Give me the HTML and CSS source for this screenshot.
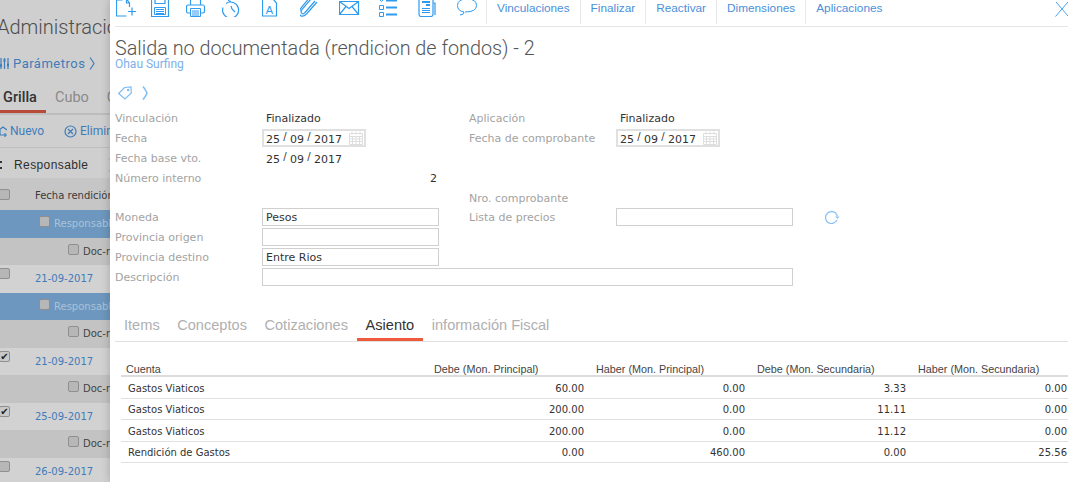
FILE: index.html
```html
<!DOCTYPE html>
<html lang="es">
<head>
<meta charset="utf-8">
<title>Salida no documentada</title>
<link rel="stylesheet" href="styles.css">
</head>
<body>
<div class="page">
  <aside class="side">
    <div class="side-title">Administración</div>
    <div class="side-params">
      <svg class="side-ico" width="9" height="13" viewBox="0 0 9 13"><path d="M1 1v11M4.500 1v11M8 1v11"/><path class="knob" d="M0 8.500h2M3.500 3.500h2M7 8h2"/></svg>
      <span>Parámetros</span>
      <svg class="side-ico" width="6" height="13" viewBox="0 0 6 13"><path d="M1 .5Q3.500 4 5 6.500Q3.500 9 1 12.500"/></svg>
    </div>
    <div class="side-tabs"><span class="side-tab-on">Grilla</span><span>Cubo</span><span>Calendario</span></div>
    <div class="side-tools">
      <svg class="side-ico" width="7" height="14" viewBox="0 0 7 14"><path d="M-1 6l4-3 4 3M0 6v5h4M5 9v4M3 11h4"/></svg>
      <span>Nuevo</span><i class="side-sep"></i>
      <svg class="side-ico" width="13" height="13" viewBox="0 0 13 13"><circle cx="6.500" cy="6.500" r="5.500"/><path d="M4 4l5 5M9 4l-5 5"/></svg>
      <span>Eliminar</span>
    </div>
    <div class="side-group"><b class="side-bars"></b><span>Responsable</span>
      <svg class="side-gt" width="5" height="14" viewBox="0 0 5 14"><path d="M1 .5Q3.500 4 4 7Q3.500 10 1 13.500"/></svg>
    </div>
    <div class="side-row head"><i class="cb"></i><span>Fecha rendición</span></div>
    <div class="side-row blue ind1"><i class="cb"></i><span>Responsable</span></div>
    <div class="side-row grey ind2"><i class="cb"></i><span>Doc-rendicion</span></div>
    <div class="side-row light"><i class="cb"></i><a>21-09-2017</a></div>
    <div class="side-row blue ind1"><i class="cb"></i><span>Responsable</span></div>
    <div class="side-row grey ind2"><i class="cb"></i><span>Doc-rendicion</span></div>
    <div class="side-row light"><i class="cb on">✔</i><a>21-09-2017</a></div>
    <div class="side-row grey ind2"><i class="cb"></i><span>Doc-rendicion</span></div>
    <div class="side-row light"><i class="cb on">✔</i><a>25-09-2017</a></div>
    <div class="side-row grey ind2"><i class="cb"></i><span>Doc-rendicion</span></div>
    <div class="side-row light"><i class="cb"></i><a>26-09-2017</a></div>
  </aside>

  <main class="modal">
    <div class="toolbar">
      <svg class="ti" width="35" height="17" viewBox="0 0 35 17"><path d="M6.500 -1h4v4h3v4M13.500 3l-3-4M6.500 0H.5v16h10M20 11.500h-8M16 7.500v8"/></svg>
      <svg class="ti" width="35" height="17" viewBox="0 0 35 17"><path d="M.5 0v16.500h17V0M4 0v3.500h10V0"/><path class="thin" d="M3.500 7.500h11v7h-11zM5 9.500h8M5 11.500h8M5 13.500h8"/></svg>
      <svg class="ti" width="36" height="17" viewBox="0 0 36 17"><path d="M4.500 5V0M14.500 5V0M4 13H2Q.5 13 .5 11V7Q.5 5 2 5h15q1.500 0 1.500 2v4q0 2-1.500 2h-2"/><path class="thin" d="M4.500 8.500h10v8h-10zM6 11h7M6 13h7M6 15h7"/></svg>
      <svg class="ti" width="40" height="17" viewBox="0 0 40 17"><path d="M4 3.500A8 8 0 1 1 1 7.500M6 .5l3 1M9 6l1 3 3 3"/></svg>
      <svg class="ti" width="38" height="17" viewBox="0 0 38 17"><path d="M9 -1H.5v17h14V3L11 -1"/><text x="7.500" y="13.500" class="ti-a">A</text></svg>
      <svg class="ti" width="39" height="17" viewBox="0 0 39 17"><path d="M15 1L5 12.500Q3.500 14.500 2 13.500T1.500 10L11-1M17 2L6.500 14Q3 17.500.5 15.500T.5 8.500L8-.5"/></svg>
      <svg class="ti" width="40" height="17" viewBox="0 0 40 17"><path d="M.5 1.500h19v13H.5zM.5 1.500L10 8.500l9.500-7M.5 14.500L7 6.500M19.500 14.500L13 6.500"/></svg>
      <svg class="ti" width="39" height="17" viewBox="0 0 39 17"><path class="thin" d="M.5 5.500h4v4h-4zM.5 12.500h4v4h-4zM1 0l1.500 1.500L4 0"/><path class="thick" d="M7 .5h11M7 7.500h11M7 14.500h11"/></svg>
      <svg class="ti" width="39" height="17" viewBox="0 0 39 17"><path d="M1 0v14q0 2.500 2 2.500h10q2 0 2-2.500V0"/><path d="M15.500 3h1.500v12"/><path class="thin" d="M4 8.500h8M4 10.500h8M4 12.500h8"/><path class="thick" d="M4 2h8M8 5h4"/></svg>
      <svg class="ti" width="29" height="17" viewBox="0 0 29 17"><path class="thin" d="M3 15Q7 15 7 12Q.5 11 .5 5.500Q.5-1 10-1T19.500 5.500Q19.500 12 8 12"/></svg>
      <nav class="tb-links">
        <a>Vinculaciones</a><a>Finalizar</a><a>Reactivar</a><a>Dimensiones</a><a>Aplicaciones</a>
      </nav>
      <svg class="close" width="13" height="16" viewBox="0 0 13 16"><path d="M.5 15.500L13 1M1 1l12 14"/></svg>
    </div>

    <h1 class="title">Salida no documentada (rendicion de fondos) - 2</h1>
    <div class="subtitle">Ohau Surfing</div>
    <div class="tags">
      <svg class="tag" width="14" height="14" viewBox="0 0 14 14"><path d="M.7 7.500L6.500 1.500 13 1l.3 6-6.300 6z"/><circle cx="10.200" cy="4" r=".7"/></svg>
      <svg class="tag chev" width="6" height="14" viewBox="0 0 6 14"><path d="M1 .5Q4 4 5 7Q4 10 1 13.500"/></svg>
    </div>

    <div class="form">
      <label>Vinculación</label><div class="val">Finalizado</div><i></i>
      <label>Aplicación</label><div class="val">Finalizado</div><i></i>

      <label>Fecha</label>
      <div class="date"><span>25</span><s>/</s><span>09</span><s>/</s><span>2017</span>
        <svg class="cal" width="14" height="14" viewBox="0 0 14 14"><path d="M.5 2.500h13v11H.5zM.5 5.500h13M3 .5v3M7 .5v3M11 .5v3M.5 8h13M.5 10.500h13M3.500 5.500v8M7 5.500v8M10.500 5.500v8"/></svg>
      </div><i></i>
      <label>Fecha de comprobante</label>
      <div class="date"><span>25</span><s>/</s><span>09</span><s>/</s><span>2017</span>
        <svg class="cal" width="14" height="14" viewBox="0 0 14 14"><path d="M.5 2.500h13v11H.5zM.5 5.500h13M3 .5v3M7 .5v3M11 .5v3M.5 8h13M.5 10.500h13M3.500 5.500v8M7 5.500v8M10.500 5.500v8"/></svg>
      </div><i></i>

      <label>Fecha base vto.</label>
      <div class="date plain"><span>25</span><s>/</s><span>09</span><s>/</s><span>2017</span></div><i></i><i></i><i></i><i></i>

      <label>Número interno</label><div class="val num">2</div><i></i><i></i><i></i><i></i>

      <i></i><i></i><i></i><label>Nro. comprobante</label><i></i><i></i>

      <label>Moneda</label><div class="inp">Pesos</div><i></i>
      <label>Lista de precios</label><div class="inp"></div>
      <svg class="refresh" width="16" height="14" viewBox="0 0 16 14"><path d="M13 10A6 6 0 1 1 11.500 3L13.500 6"/><path d="M11 6.500h4.500L13.500 9z" class="solid"/></svg>

      <label>Provincia origen</label><div class="inp"></div><i></i><i></i><i></i><i></i>
      <label>Provincia destino</label><div class="inp">Entre Rios</div><i></i><i></i><i></i><i></i>
      <label>Descripción</label><div class="inp wide"></div><i></i>
    </div>

    <div class="tabs">
      <a>Items</a><a>Conceptos</a><a>Cotizaciones</a><a class="on">Asiento</a><a>información Fiscal</a>
    </div>

    <table class="grid">
      <colgroup><col class="c1"><col class="cn"><col class="cn"><col class="cn"><col class="cn"></colgroup>
      <thead>
        <tr><th>Cuenta</th><th>Debe (Mon. Principal)</th><th>Haber (Mon. Principal)</th><th>Debe (Mon. Secundaria)</th><th>Haber (Mon. Secundaria)</th></tr>
      </thead>
      <tbody>
        <tr><td>Gastos Viaticos</td><td>60.00</td><td>0.00</td><td>3.33</td><td>0.00</td></tr>
        <tr><td>Gastos Viaticos</td><td>200.00</td><td>0.00</td><td>11.11</td><td>0.00</td></tr>
        <tr><td>Gastos Viaticos</td><td>200.00</td><td>0.00</td><td>11.12</td><td>0.00</td></tr>
        <tr><td>Rendición de Gastos</td><td>0.00</td><td>460.00</td><td>0.00</td><td>25.56</td></tr>
      </tbody>
    </table>
  </main>
</div>
</body>
</html>
```

FILE: styles.css
```css
* { box-sizing: border-box; }
html, body { margin: 0; height: 100%; overflow: hidden; }
body { font-family: "DejaVu Sans", sans-serif; background: #fff; }
.page { display: flex; width: 1068px; height: 482px; overflow: hidden; }

/* dimmed page behind the panel */
.side { flex: 0 0 110px; width: 110px; height: 482px; overflow: hidden; background: #cfcfcf; white-space: nowrap; }
.side-title { height: 50px; padding: 14px 0 0; margin-left: -3px; font: 300 20px/26px Roboto, sans-serif; color: #4d4d4d; }
.side-params { height: 27px; display: flex; align-items: center; gap: 4px; font: 13px/16px Roboto, sans-serif; color: #3f7cba; letter-spacing: .5px; }
.side-ico { flex: none; fill: none; stroke: #3f7cba; stroke-width: 1.2; }
.side-ico .knob { stroke-width: 2.500; }
.side-tabs { height: 38px; display: flex; align-items: flex-end; gap: 18px; border-bottom: 2px solid #bdbdbd; font: 14.500px/18px Roboto, sans-serif; color: #8a8a8a; }
.side-tabs span { padding-bottom: 6px; }
.side-tabs .side-tab-on { flex: none; width: 46px; padding: 0 0 3px 3px; margin-right: -9px; color: #333; font-weight: 500; border-bottom: 3px solid #b84a38; }
.side-tools { height: 33px; display: flex; align-items: center; gap: 3px; border-bottom: 1px solid #bfbfbf; font: 12px/16px Roboto, sans-serif; color: #3f7cba; }
.side-sep { width: 1px; height: 16px; background: #b5b5b5; margin: 0 7px; }
.side-group { height: 30px; padding-top: 3px; display: flex; align-items: center; gap: 12px; font: 500 12px/16px "Liberation Sans", sans-serif; color: #2e2e2e; letter-spacing: .4px; }
.side-bars { flex: none; width: 2px; height: 8px; border-top: 2px solid #333; border-bottom: 2px solid #333; }
.side-gt { flex: none; margin-left: 8px; fill: none; stroke: #b0b0b0; stroke-width: 1; }
.side-row { display: flex; align-items: center; gap: 25px; height: 27.500px; font-size: 10px; color: #444; }
.cb { flex: none; width: 11px; height: 11px; margin-left: -1px; margin-top: -10px; border: 1px solid #8f8f8f; border-radius: 2px; background: #b7b7b7; font: 10px/9px "DejaVu Sans", sans-serif; color: #222; text-align: center; }
.cb.on { background: #c9c9c9; }
.head { height: 32px; padding-top: 3px; background: #c6c6c6; color: #3a3a3a; }
.head .cb { margin-top: -2px; }
.blue { background: #6d97be; color: #a9c3da; }
.grey { background: #c3c3c3; }
.light { background: #d2d2d2; }
.light a { color: #3f7cba; }
.ind1 { padding-left: 39px; gap: 4px; }
.ind2 { padding-left: 68px; gap: 4px; }
.ind1 .cb, .ind2 .cb { margin: -4px 0 0; }

/* panel */
.modal { flex: 1; min-width: 0; height: 482px; overflow: hidden; background: #fff; box-shadow: 0 0 9px rgba(0,0,0,.22); padding-left: 5px; }
.toolbar { height: 27px; display: flex; align-items: flex-start; padding-left: 1px; border-bottom: 1px solid #e6e6e6; }
.ti { flex: none; fill: none; stroke: #2f9bf0; stroke-width: 1.2; }
.ti .thin { stroke-width: 1; }
.ti .thick { stroke-width: 2; }
.ti-a { font: 11px "Liberation Sans", sans-serif; fill: #2f9bf0; stroke: none; text-anchor: middle; }
.tb-links { display: flex; height: 24px; }
.tb-links a { padding: 0 10px; border-left: 1px solid #e8e8e8; font: 11.800px/16px "Liberation Sans", sans-serif; color: #4a90d9; }
.tb-links a:last-child { padding-right: 0; }
.close { flex: none; margin: 1px 0 0 auto; fill: none; stroke: #4aa3ee; stroke-width: 1; }

.title { margin: 10px 0 0; font: 300 19.800px/24px Roboto, sans-serif; color: #555; }
.subtitle { margin-top: -4px; font: 12px/14px Roboto, sans-serif; color: #7db0ea; }
.tags { height: 22px; margin-top: 11px; padding-left: 3px; display: flex; align-items: center; gap: 10px; }
.tag { flex: none; fill: none; stroke: #7fbdf2; stroke-width: 1.2; }
.chev { stroke-width: 1.5; }

.form {
  display: grid;
  grid-template-columns: 147px 177px 30px 147px 177px 60px;
  grid-template-rows: 20px 20px 20px 20px 19px 20px 20px 20px 20px;
  margin-top: 4px;
  font-size: 11px;
  align-items: center;
}
.form label { padding-top: 2px; color: #a3a3a3; line-height: 14px; }
.val { padding: 2px 0 0 4px; color: #333; line-height: 14px; }
.num { text-align: right; padding-right: 2px; }
.date { display: flex; align-items: center; width: 104px; height: 18px; padding: 2px 0 0 2px; border: 2px solid #e0e0e0; color: #333; }
.date s { text-decoration: none; font-size: 10px; margin: -5px 3.300px 0; }
.date.plain { border: 0; padding-left: 4px; }
.cal { flex: none; margin: -2px 1px 0 auto; fill: none; stroke: #dedede; stroke-width: 1; }
.inp { height: 18px; padding: 1px 0 0 3px; border: 1px solid #d0d0d0; color: #333; line-height: 15px; }
.wide { grid-column: 2 / 6; }
.refresh { margin-left: 31px; fill: none; stroke: #8cc2f1; stroke-width: 1.3; }
.refresh .solid { fill: #8cc2f1; stroke: none; }

.tabs { display: flex; height: 34px; margin-top: 21px; border-bottom: 1px solid #e0e0e0; }
.tabs a { padding: 8px 8.750px 0; height: 33px; font: 14.600px/18px "Liberation Sans", sans-serif; color: #b0b0b0; }
.tabs a:first-child { padding-left: 9px; }
.tabs a.on { color: #333; border-bottom: 3px solid #ef5a3c; }

.grid { width: 952px; margin: 20px 0 0 6px; table-layout: fixed; border-collapse: separate; border-spacing: 0; }
.c1 { width: 308px; }
.cn { width: 161px; }
.grid th { height: 15px; padding: 1px 0 0 5px; border-bottom: 2px solid #dcdcdc; text-align: left; font: 400 10.800px/12px "Liberation Sans", sans-serif; color: #444; }
.grid th:nth-child(n+3) { padding-left: 6px; }
.grid td { height: 21.500px; padding: 2px 6px 0 0; border-bottom: 1px solid #e0e0e0; text-align: right; font-size: 10px; color: #333; }
.grid td:first-child { padding-left: 7px; text-align: left; }
```
